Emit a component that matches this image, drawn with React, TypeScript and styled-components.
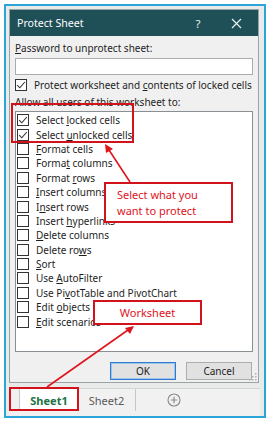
import React from "react";
import styled, { createGlobalStyle } from "styled-components";

const Global = createGlobalStyle`
  html, body { margin: 0; padding: 0; background: #ffffff; }
  body { font-family: "Noto Sans", "Open Sans", "DejaVu Sans", sans-serif; }
  * { box-sizing: border-box; }
`;

const Page = styled.div`
  position: relative;
  width: 271px;
  height: 426px;
  padding: 4px 0 0 4px;
  overflow: hidden;
`;

const Frame = styled.div`
  width: 262px;
  height: 414px;
  border: 2px solid #2ba4d8;
  background: #e9ebeb;
  padding: 3px 4px 0 3px;
  display: flex;
  flex-direction: column;
`;

const Dialog = styled.div`
  width: 250px;
  height: 374px;
  border: 1px solid #9aa3a6;
  background: #f0f0f0;
  display: flex;
  flex-direction: column;
  position: relative;
`;

const TitleBar = styled.div`
  height: 26px;
  background: #1f4f57;
  color: #ffffff;
  display: flex;
  align-items: center;
  padding: 0 0 0 7px;
  font-size: 10.6px;
`;

const TitleText = styled.div`
  flex: 1;
`;

const TitleBtn = styled.div<{ $w: number }>`
  width: ${(p) => p.$w}px;
  text-align: center;
  font-size: 11.5px;
  color: #e8f0f0;
  display: flex;
  justify-content: center;
`;

const Body = styled.div`
  flex: 1;
  display: flex;
  flex-direction: column;
  padding: 5px 5px 0 5px;
  font-size: 10px;
  color: #1e1e1e;
`;

const Label = styled.div<{ $mt?: number }>`
  height: 14px;
  line-height: 14px;
  margin-top: ${(p) => p.$mt ?? 0}px;
  white-space: nowrap;
`;

const Input = styled.div`
  height: 17px;
  width: 238px;
  margin-top: 3px;
  background: #ffffff;
  border: 1px solid #acacac;
`;

const CheckRow = styled.div<{ $h: number }>`
  display: flex;
  align-items: center;
  height: ${(p) => p.$h}px;
  white-space: nowrap;
`;

const Box = styled.div`
  width: 12px;
  height: 12px;
  border: 1px solid #333333;
  background: #ffffff;
  flex: none;
  display: flex;
  align-items: center;
  justify-content: center;
`;

const CheckText = styled.span<{ $gap: number }>`
  margin-left: ${(p) => p.$gap}px;
`;

const List = styled.div`
  width: 238px;
  height: 241px;
  margin-top: 2px;
  background: #ffffff;
  border: 1px solid #8a8f93;
  padding: 1px 0 0 1px;
`;

const ButtonRow = styled.div`
  display: flex;
  justify-content: flex-end;
  gap: 10px;
  margin-top: 10px;
  padding-right: 1px;
`;

const Button = styled.div<{ $primary?: boolean }>`
  width: 66px;
  height: 18px;
  display: flex;
  align-items: center;
  justify-content: center;
  background: #e1e1e1;
  border: 1px solid ${(p) => (p.$primary ? "#2f7bd0" : "#adadad")};
  box-shadow: ${(p) => (p.$primary ? "inset 0 0 0 1px #9cc4ee" : "none")};
  font-size: 10px;
`;

const Grip = styled.svg`
  position: absolute;
  right: 1px;
  bottom: 1px;
`;

const GridGap = styled.div`
  height: 5px;
`;

const TabBar = styled.div`
  flex: 1;
  background: #f1f1f1;
  border-top: 1px solid #d4d4d4;
  display: flex;
  align-items: stretch;
  padding-bottom: 5px;
`;

const NavStub = styled.div`
  width: 11px;
  border-right: 1px solid #c8c8c8;
`;

const SheetTab = styled.div<{ $active?: boolean }>`
  width: 58px;
  display: flex;
  align-items: center;
  justify-content: center;
  background: ${(p) => (p.$active ? "#ffffff" : "transparent")};
  color: ${(p) => (p.$active ? "#217346" : "#5a5a5a")};
  font-weight: ${(p) => (p.$active ? 700 : 400)};
  font-size: 11px;
  border-right: ${(p) => (p.$active ? "none" : "1px solid #c6c6c6")};
`;

const AddSheet = styled.div`
  width: 76px;
  display: flex;
  align-items: center;
  justify-content: center;
`;

const Overlay = styled.div<{ $x: number; $y: number; $w: number; $h: number }>`
  position: absolute;
  left: ${(p) => p.$x}px;
  top: ${(p) => p.$y}px;
  width: ${(p) => p.$w}px;
  height: ${(p) => p.$h}px;
  border: 2px solid #d3131c;
`;

const Callout = styled(Overlay)`
  background: #ffffff;
  color: #e0131d;
  font-size: 11px;
  line-height: 16px;
  display: flex;
  flex-direction: column;
  justify-content: center;
  padding-left: 11px;
`;

const CenterCallout = styled(Callout)`
  align-items: center;
  padding-left: 0;
`;

const Arrows = styled.svg`
  position: absolute;
  left: 0;
  top: 0;
  pointer-events: none;
`;

const Check = () => (
  <svg width="10" height="10" viewBox="0 0 10 10">
    <path d="M1.2 5.2 L3.8 7.8 L8.8 2" stroke="#333" strokeWidth="1.1" fill="none" />
  </svg>
);

type Item = { pre: string; key: string; post: string; checked?: boolean };

const items: Item[] = [
  { pre: "Select ", key: "l", post: "ocked cells", checked: true },
  { pre: "Select ", key: "u", post: "nlocked cells", checked: true },
  { pre: "", key: "F", post: "ormat cells" },
  { pre: "Forma", key: "t", post: " columns" },
  { pre: "Format ", key: "r", post: "ows" },
  { pre: "", key: "I", post: "nsert columns" },
  { pre: "I", key: "n", post: "sert rows" },
  { pre: "Insert ", key: "h", post: "yperlinks" },
  { pre: "", key: "D", post: "elete columns" },
  { pre: "Delete ro", key: "w", post: "s" },
  { pre: "", key: "S", post: "ort" },
  { pre: "Use ", key: "A", post: "utoFilter" },
  { pre: "Use Pi", key: "v", post: "otTable and PivotChart" },
  { pre: "Edit ", key: "o", post: "bjects" },
  { pre: "", key: "E", post: "dit scenarios" },
];

export default function App() {
  return (
    <Page>
      <Global />
      <Frame>
        <Dialog>
          <TitleBar>
            <TitleText>Protect Sheet</TitleText>
            <TitleBtn $w={16}>?</TitleBtn>
            <TitleBtn $w={24} />
            <TitleBtn $w={12}>
              <svg width="11" height="11" viewBox="0 0 11 11">
                <path d="M1 1 L10 10 M10 1 L1 10" stroke="#e8f0f0" strokeWidth="1.2" />
              </svg>
            </TitleBtn>
            <TitleBtn $w={16} />
          </TitleBar>
          <Body>
            <Label>
              <u>P</u>assword to unprotect sheet:
            </Label>
            <Input />
            <CheckRow $h={20}>
              <Box>
                <Check />
              </Box>
              <CheckText $gap={7}>
                Protect worksheet and <u>c</u>ontents of locked cells
              </CheckText>
            </CheckRow>
            <Label>Allow all users of this worksheet to:</Label>
            <List>
              {items.map((it, i) => (
                <CheckRow key={i} $h={14.4}>
                  <Box>{it.checked && <Check />}</Box>
                  <CheckText $gap={7}>
                    {it.pre}
                    <u>{it.key}</u>
                    {it.post}
                  </CheckText>
                </CheckRow>
              ))}
            </List>
            <ButtonRow>
              <Button $primary>OK</Button>
              <Button>Cancel</Button>
            </ButtonRow>
          </Body>
          <Grip width="8" height="8" viewBox="0 0 8 8">
            <g fill="#b0b0b0">
              <rect x="6" y="0" width="1.5" height="1.5" />
              <rect x="3" y="3" width="1.5" height="1.5" />
              <rect x="6" y="3" width="1.5" height="1.5" />
              <rect x="0" y="6" width="1.5" height="1.5" />
              <rect x="3" y="6" width="1.5" height="1.5" />
              <rect x="6" y="6" width="1.5" height="1.5" />
            </g>
          </Grip>
        </Dialog>
        <GridGap />
        <TabBar>
          <NavStub />
          <SheetTab $active>Sheet1</SheetTab>
          <SheetTab>Sheet2</SheetTab>
          <AddSheet>
            <svg width="14" height="14" viewBox="0 0 14 14">
              <circle cx="7" cy="7" r="6" fill="none" stroke="#8a8a8a" strokeWidth="1.1" />
              <path d="M7 3.8 V10.2 M3.8 7 H10.2" stroke="#8a8a8a" strokeWidth="1.2" />
            </svg>
          </AddSheet>
        </TabBar>
      </Frame>

      <Overlay $x={11} $y={103} $w={123} $h={40} />
      <Callout $x={104} $y={182} $w={129} $h={41}>
        <span>Select what you</span>
        <span>want to protect</span>
      </Callout>
      <CenterCallout $x={93} $y={300} $w={109} $h={25}>
        Worksheet
      </CenterCallout>
      <Overlay $x={9} $y={387} $w={70} $h={24} />

      <Arrows width="271" height="426" viewBox="0 0 271 426">
        <g stroke="#e0141d" strokeWidth="1.6" fill="#e0141d">
          <line x1="130" y1="182" x2="109" y2="150" />
          <polygon points="105,144 113,149 106,153" stroke="none" />
          <line x1="47" y1="387" x2="128" y2="330" />
          <polygon points="134,326 130,334 125,328" stroke="none" />
        </g>
      </Arrows>
    </Page>
  );
}
